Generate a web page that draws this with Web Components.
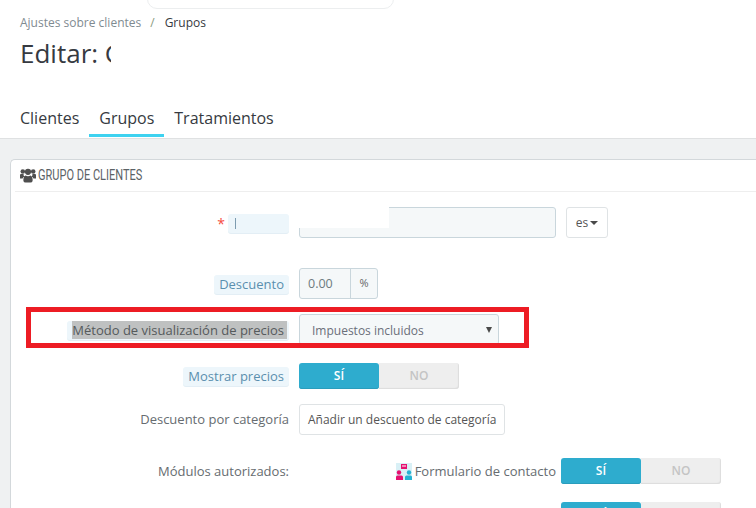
<!DOCTYPE html>
<html lang="es">
<head>
<meta charset="utf-8">
<title>Editar grupo</title>
<style>
    html, body { margin: 0; height: 100%; overflow: hidden; }
    body { width: 756px; height: 508px; background: #eff1f2; font-family: "Open Sans", sans-serif; color: #6c868e; position: relative; }
</style>
</head>
<body>
<page-head></page-head>
<group-panel>
    <form-row top="15" pill req label="&#8203;" pill-width="61">
        <div style="display:flex;gap:10px">
            <text-box></text-box>
            <lang-button></lang-button>
        </div>
    </form-row>
    <form-row top="30" pill label="Descuento"><percent-box></percent-box></form-row>
    <form-row top="15" pill marked label="Método de visualización de precios"><select-box>Impuestos incluidos</select-box></form-row>
    <form-row top="18" pill label="Mostrar precios"><yes-no></yes-no></form-row>
    <form-row top="15" label="Descuento por categoría"><plain-button>Añadir un descuento de categoría</plain-button></form-row>
    <form-row top="23" label="Módulos autorizados:"><module-row>Formulario de contacto</module-row></form-row>
    <form-row top="18" label=""><module-row hidden-label></module-row></form-row>
</group-panel>
<red-mark></red-mark>

<script>
function shadowOf(el, html) {
    const shadow = el.attachShadow({ mode: 'open' });
    shadow.innerHTML = html;
    return shadow;
}

class PageHead extends HTMLElement {
    constructor() {
        super();
        shadowOf(this, `
            <style>
                :host { display: block; height: 138px; background: #fff; border-bottom: 1px solid #dfe1e2; position: relative; }
                .search { position: absolute; left: 147px; top: -20px; width: 245px; height: 27px; border: 1px solid #eceeef; border-radius: 10px; background: #fff; }
                .crumbs { padding: 15px 0 0 20px; font-size: 12px; line-height: 16px; color: #7f8b91; display: flex; }
                .crumbs .sep { margin: 0 10px 0 9px; color: #8a9a7e; }
                .crumbs .now { color: #363a41; }
                h1 { margin: 5px 0 0 20px; font-size: 26px; font-weight: 400; line-height: 34px; color: #363a41; width: 91px; height: 34px; overflow: hidden; white-space: nowrap; }
                nav { position: absolute; left: 10px; top: 105px; display: flex; }
                nav a { padding: 0 10px; font-size: 16px; line-height: 27px; color: #363a41; height: 30px; }
                nav a.on { border-bottom: 3px solid #3ed2f0; height: 29px; }
            </style>
            <div class="search"></div>
            <div class="crumbs"><span>Ajustes sobre clientes</span><span class="sep">/</span><span class="now">Grupos</span></div>
            <h1>Editar: Grupo</h1>
            <nav><a>Clientes</a><a class="on">Grupos</a><a>Tratamientos</a></nav>
        `);
    }
}

class GroupPanel extends HTMLElement {
    constructor() {
        super();
        shadowOf(this, `
            <style>
                :host { display: block; margin: 20px 0 0 10px; background: #fff; border: 1px solid #d3d8db; border-right: 0; border-bottom: 0; border-radius: 5px 0 0 0; height: 348px; overflow: hidden; padding: 0 0 0 4px; }
                .title { display: flex; align-items: center; gap: 2px; height: 31px; border-bottom: 1px solid #eeeeee; font-family: Roboto, sans-serif; font-size: 14.5px; color: #5b6266; padding-left: 5px; }
                .title svg { width: 16px; height: 15px; fill: #4f4f4f; flex: none; }
                .title span { display: inline-block; transform: scaleX(.76); transform-origin: left center; white-space: nowrap; }
            </style>
            <div class="title">
                <svg viewBox="0 0 16 14"><circle cx="2.800" cy="3" r="2.300"/><circle cx="13.200" cy="3" r="2.300"/><circle cx="8" cy="3.300" r="3.100"/><path d="M0 6.500q0-1 1-1h2.600q-.4 1.600 1 2.800Q2.800 8.600 2.600 10H0zM16 6.500q0-1-1-1h-2.600q.4 1.600-1 2.800 1.800.3 2 1.700H16zM3.400 10.400Q3.700 7.400 5.500 7 8 8.600 10.500 7 12.300 7.400 12.600 10.400V12.500Q12.200 14 10.500 14H5.500Q3.800 14 3.400 12.500z"/></svg>
                <span>GRUPO DE CLIENTES</span>
            </div>
            <slot></slot>
        `);
    }
}

class FormRow extends HTMLElement {
    constructor() {
        super();
        shadowOf(this, `
            <style>
                :host { display: grid; grid-template-columns: 274px 1fr; column-gap: 10px; align-items: center; font-size: 13px; color: #6c868e; }
                .lab { display: flex; justify-content: flex-end; align-items: center; white-space: nowrap; }
                .txt { line-height: 19px; color: #666c70; }
                .pill { padding-top: 1px; }
                .pill .txt { background: #edf6fb; border-radius: 3px; padding: 0 5px; color: #5a8fae; height: 19px; display: block; box-shadow: 0 1px 0 #e3eef5; }
                .pill .txt.has-mark { padding-right: 2px; color: #555a5c; }
                .star { color: #f54c3e; margin-right: 3px; font-size: 14px; }
                mark { display: inline-block; background: #bfc1c1; color: #555a5c; padding-right: 3px; height: 18px; line-height: 18px; }
                .bar { position: absolute; width: 1px; height: 11px; background: #7d9cb0; margin: 4px 0 0 2px; }
            </style>
            <div class="lab"></div>
            <div><slot></slot></div>
        `);
    }

    connectedCallback() {
        const root = this.shadowRoot;
        this.style.marginTop = this.getAttribute('top') + 'px';
        const lab = root.querySelector('.lab');
        if (this.hasAttribute('pill')) lab.classList.add('pill');
        if (this.hasAttribute('req')) {
            const star = document.createElement('span');
            star.className = 'star';
            star.textContent = '*';
            lab.appendChild(star);
        }
        const txt = document.createElement('span');
        txt.className = 'txt';
        const text = this.getAttribute('label');
        if (this.hasAttribute('marked')) {
            const m = document.createElement('mark');
            m.textContent = text;
            txt.classList.add('has-mark');
            txt.appendChild(m);
        } else {
            txt.textContent = text;
        }
        if (this.hasAttribute('pill-width')) {
            txt.style.width = this.getAttribute('pill-width') + 'px';
            txt.style.boxSizing = 'border-box';
            txt.innerHTML = '<i class="bar"></i>';
        }
        lab.appendChild(txt);
    }
}

class TextBox extends HTMLElement {
    constructor() {
        super();
        shadowOf(this, `
            <style>
                :host { display: block; position: relative; width: 257px; height: 31px; box-sizing: border-box; background: #f5f8f9; border: 1px solid #c9d6dc; border-radius: 3px; }
                .mask { position: absolute; left: -1px; top: -1px; width: 90px; height: 21px; background: #fff; }
            </style>
            <div class="mask"></div>
        `);
    }
}

class LangButton extends HTMLElement {
    constructor() {
        super();
        shadowOf(this, `
            <style>
                :host { display: flex; align-items: center; justify-content: center; gap: 2px; width: 42px; height: 31px; box-sizing: border-box; background: #fff; border: 1px solid #dfe3e5; border-radius: 3px; font-size: 12px; color: #555; }
                i { width: 0; height: 0; border: 4.500px solid transparent; border-top: 4.500px solid #4a4a4a; border-bottom: 0; }
            </style>
            es<i></i>
        `);
    }
}

class PercentBox extends HTMLElement {
    constructor() {
        super();
        shadowOf(this, `
            <style>
                :host { display: flex; width: 79px; height: 31px; box-sizing: border-box; background: #f5f8f9; border: 1px solid #c9d6dc; border-radius: 3px; font-size: 12px; color: #6e7b80; align-items: center; }
                .val { width: 51px; padding-left: 8px; box-sizing: border-box; line-height: 29px; font-size: 12.500px; border-right: 1px solid #c9d6dc; }
                .unit { flex: 1; text-align: center; font-size: 11px; color: #666; margin-top: -2px; }
            </style>
            <span class="val">0.00</span><span class="unit">%</span>
        `);
    }
}

class SelectBox extends HTMLElement {
    constructor() {
        super();
        shadowOf(this, `
            <style>
                :host { display: flex; align-items: center; justify-content: space-between; width: 200px; height: 31px; box-sizing: border-box; background: #f5f8f9; border: 1px solid #c9d6dc; border-radius: 3px; padding: 1px 6px 0 12px; font-size: 12px; color: #6b6f7a; }
                i { width: 0; height: 0; border: 3px solid transparent; border-top: 6px solid #4a4a4a; border-bottom: 0; margin-top: -1px; }
            </style>
            <span><slot></slot></span><i></i>
        `);
    }
}

class YesNo extends HTMLElement {
    constructor() {
        super();
        shadowOf(this, `
            <style>
                :host { display: flex; width: 160px; height: 26px; border-radius: 3px; font-size: 12px; font-weight: 600; line-height: 25px; text-align: center; flex: none; }
                span { flex: 1; }
                .si { background: #2eacce; color: #fff; border-radius: 3px; box-shadow: inset 0 -1px 0 #2a9dbc; }
                .no { background: #eeeeee; color: #c4c4c4; border-radius: 0 3px 3px 0; box-shadow: inset -1px -1px 1px #dcdcdc; }
            </style>
            <span class="si">SÍ</span><span class="no">NO</span>
        `);
    }
}

class PlainButton extends HTMLElement {
    constructor() {
        super();
        shadowOf(this, `
            <style>
                :host { display: inline-flex; align-items: center; height: 31px; box-sizing: border-box; background: #fff; border: 1px solid #dfe3e5; border-radius: 3px; padding: 0 8px; font-size: 12px; color: #555; white-space: nowrap; vertical-align: top; }
            </style>
            <slot></slot>
        `);
    }
}

class ModuleRow extends HTMLElement {
    constructor() {
        super();
        shadowOf(this, `
            <style>
                :host { display: flex; align-items: center; justify-content: flex-end; width: 422px; font-size: 13px; color: #666c70; }
                svg { width: 16px; height: 17px; margin-right: 3px; margin-top: 1px; flex: none; }
                .t { margin-right: 5px; white-space: nowrap; }
            </style>
            <svg viewBox="0 0 16 17">
                <rect width="16" height="17" fill="#d9f0f6"/>
                <rect x="5" y="1" width="6" height="5" fill="#e6106f"/>
                <rect x="6" y="2.500" width="4" height="1" fill="#fff"/>
                <circle cx="3" cy="9.500" r="2.200" fill="#e6106f"/>
                <circle cx="13" cy="9.500" r="2.200" fill="#25b3d3"/>
                <path d="M0 17v-3q0-1.500 1.500-1.500h4Q7 12.500 7 14v3z" fill="#e6106f"/>
                <path d="M9 17v-3q0-1.500 1.500-1.500h4Q16 12.500 16 14v3z" fill="#25b3d3"/>
            </svg>
            <span class="t"><slot></slot></span>
            <yes-no></yes-no>
        `);
    }

    connectedCallback() {
        if (this.hasAttribute('hidden-label')) {
            this.shadowRoot.querySelector('svg').style.visibility = 'hidden';
        }
    }
}

class RedMark extends HTMLElement {
    constructor() {
        super();
        shadowOf(this, `
            <style>
                :host { position: absolute; left: 26px; top: 307px; width: 503px; height: 41px; box-sizing: border-box; border: 5px solid #ed1c24; pointer-events: none; }
            </style>
        `);
    }
}

customElements.define('page-head', PageHead);
customElements.define('group-panel', GroupPanel);
customElements.define('form-row', FormRow);
customElements.define('text-box', TextBox);
customElements.define('lang-button', LangButton);
customElements.define('percent-box', PercentBox);
customElements.define('select-box', SelectBox);
customElements.define('yes-no', YesNo);
customElements.define('plain-button', PlainButton);
customElements.define('module-row', ModuleRow);
customElements.define('red-mark', RedMark);
</script>
</body>
</html>
